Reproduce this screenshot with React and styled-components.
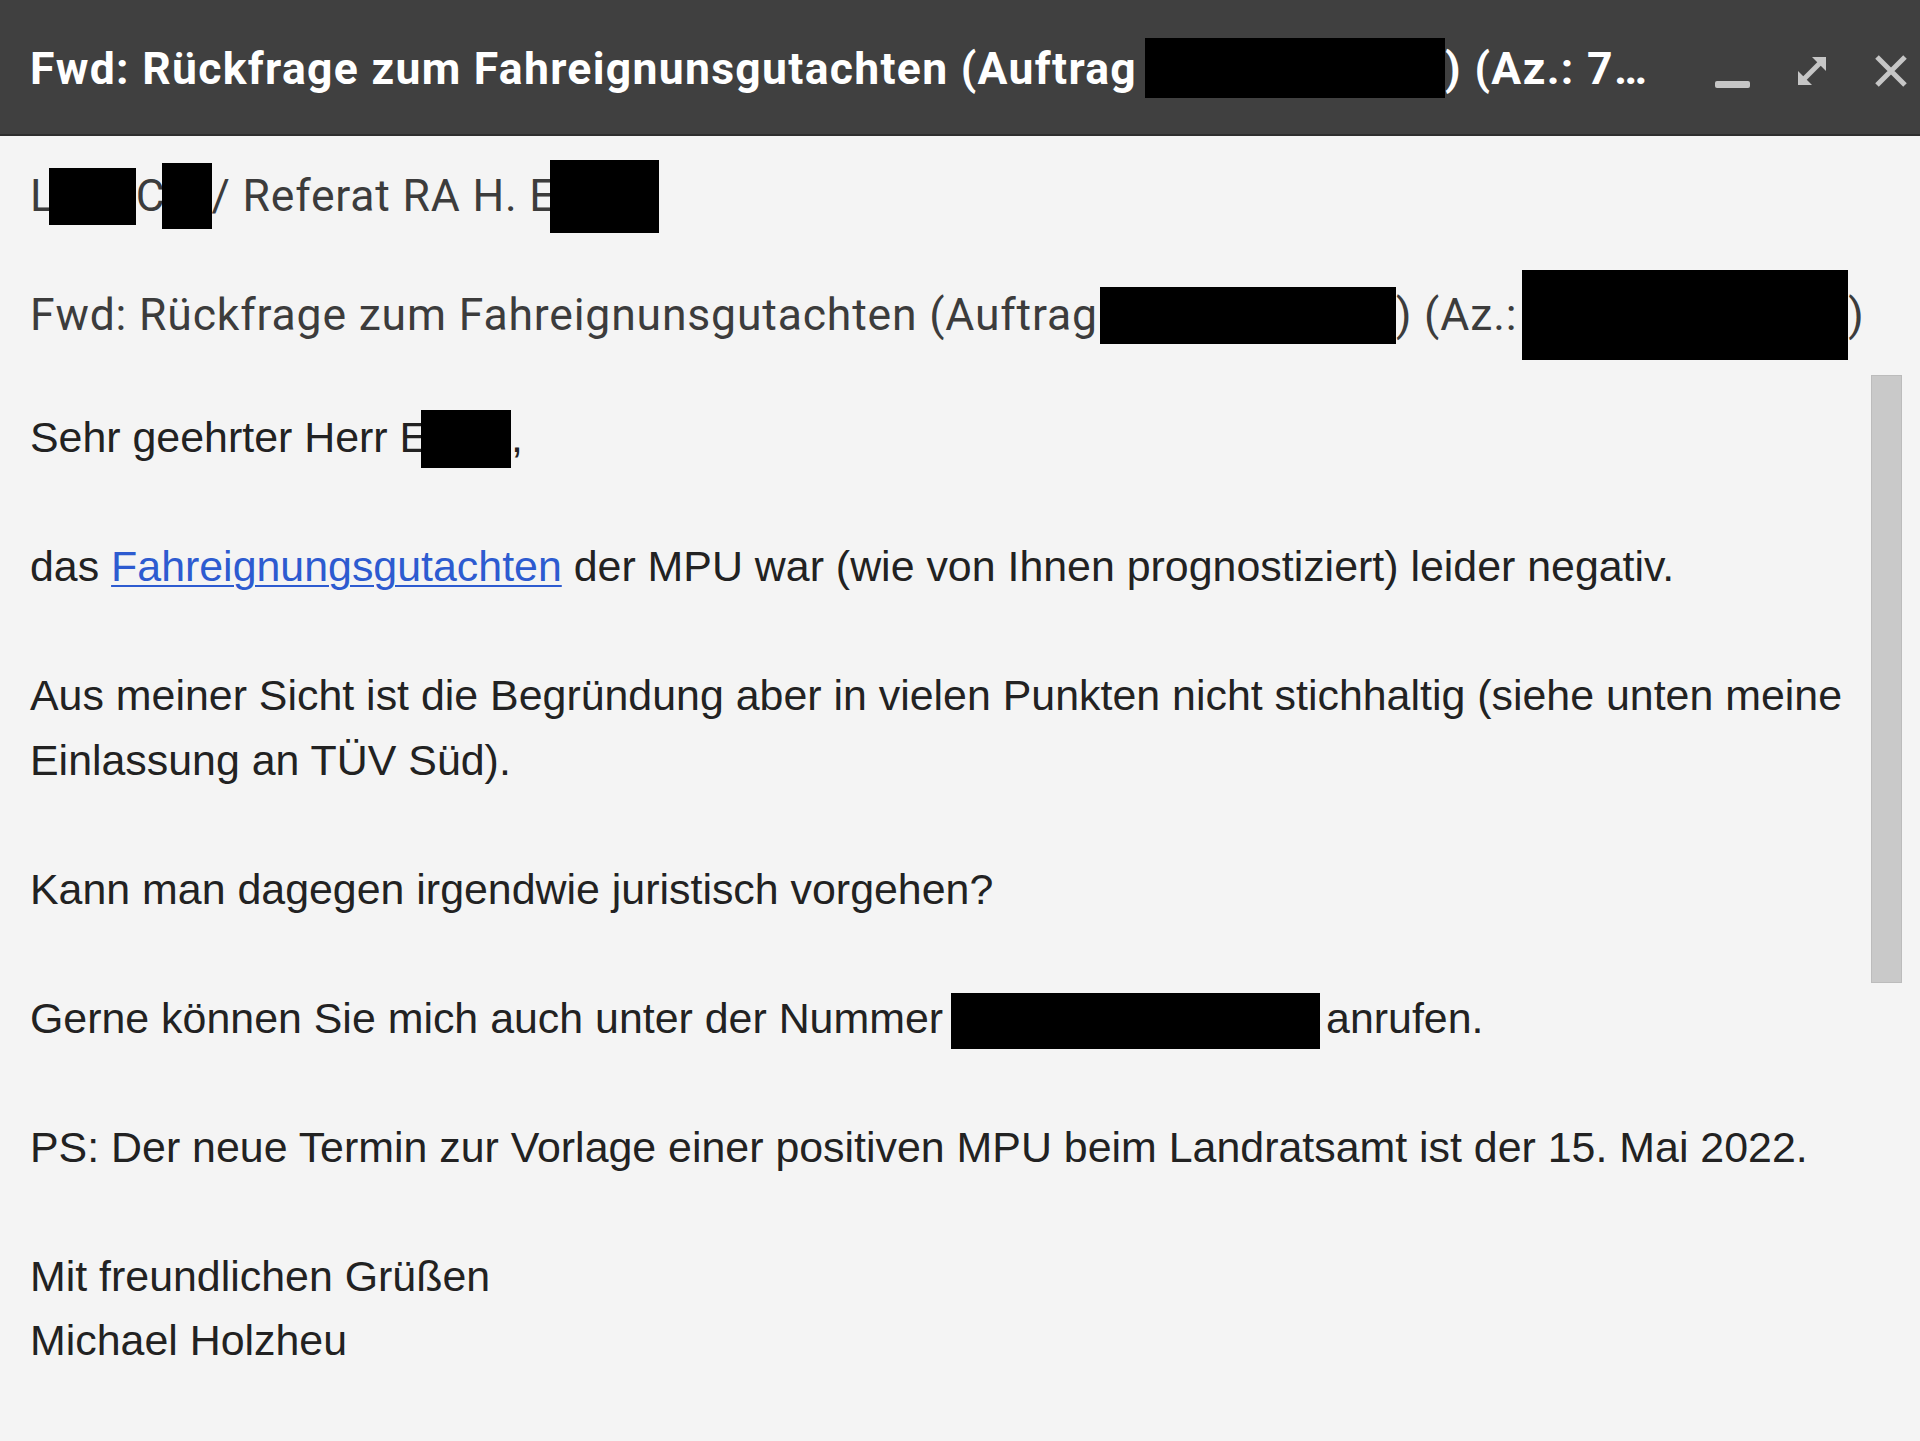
import React from 'react';
import styled, { createGlobalStyle } from 'styled-components';

const GlobalStyle = createGlobalStyle`
  html, body {
    margin: 0;
    padding: 0;
    background: #f4f4f4;
  }
`;

const Window = styled.div`
  width: 1920px;
  height: 1441px;
  display: flex;
  flex-direction: column;
  background: #f4f4f4;
  overflow: hidden;
`;

const TitleBar = styled.div`
  height: 136px;
  flex-shrink: 0;
  display: flex;
  align-items: center;
  padding: 0 10px 0 30px;
  background: #404040;
  border-bottom: 2px solid #2e2e2e;
  box-sizing: border-box;
`;

const Title = styled.div`
  flex: 1;
  font-family: Roboto, 'Liberation Sans', sans-serif;
  font-weight: 700;
  font-size: 44.5px;
  letter-spacing: 1.3px;
  color: #ffffff;
  white-space: nowrap;
  overflow: hidden;
  padding-top: 2px;
`;

const Controls = styled.div`
  display: flex;
  align-items: center;
  gap: 41px;
  padding-top: 8px;
`;

const IconButton = styled.span`
  display: flex;
  align-items: center;
  justify-content: center;
  width: 38px;
  height: 38px;
  color: #c6c6c6;
`;

const Redacted = styled.span`
  display: inline-block;
  width: ${(p) => p.$w}px;
  height: ${(p) => p.$h}px;
  margin-left: ${(p) => p.$ml || 0}px;
  margin-right: ${(p) => p.$mr || 0}px;
  vertical-align: ${(p) => p.$va || 0}px;
  background: #000;
`;

const FieldRow = styled.div`
  height: ${(p) => p.$h}px;
  flex-shrink: 0;
  display: flex;
  align-items: center;
  padding-left: 30px;
  font-family: Roboto, 'Liberation Sans', sans-serif;
  font-size: 44.5px;
  letter-spacing: ${(p) => p.$ls}px;
  color: #3c3c3c;
  white-space: nowrap;
`;

const BodyArea = styled.div`
  flex: 1;
  display: flex;
  align-items: flex-start;
`;

const Content = styled.div`
  flex: 1;
  padding: 31px 0 0 30px;
  font-family: 'Liberation Sans', Arial, sans-serif;
  font-size: 42.9px;
  line-height: 64.5px;
  color: #222222;
  white-space: nowrap;
`;

const Paragraph = styled.p`
  margin: 0 0 64.5px;
`;

const Link = styled.a`
  color: #2d5bd0;
  text-decoration: underline;
  text-underline-offset: 4px;
  text-decoration-thickness: 2px;
`;

const ScrollTrack = styled.div`
  width: 31px;
  margin: 1px 18px 0 0;
`;

const ScrollThumb = styled.div`
  height: 606px;
  background: #c9c9c9;
  border: 1px solid #bcbcbc;
`;

const MinimizeIcon = () => (
  <svg width="38" height="38" viewBox="0 0 38 38">
    <rect x="1" y="29" width="35" height="7" rx="2" fill="currentColor" />
  </svg>
);

const ExpandIcon = () => (
  <svg width="38" height="38" viewBox="0 0 38 38">
    <path d="M9 29 L29 9" stroke="currentColor" strokeWidth="5" />
    <path d="M19 5 H33 V19 Z" fill="currentColor" />
    <path d="M5 19 V33 H19 Z" fill="currentColor" />
  </svg>
);

const CloseIcon = () => (
  <svg width="38" height="38" viewBox="0 0 38 38">
    <path d="M5 5 L33 33 M33 5 L5 33" stroke="currentColor" strokeWidth="5" />
  </svg>
);

const App = () => (
  <>
    <GlobalStyle />
    <Window>
      <TitleBar>
        <Title>
          Fwd: Rückfrage zum Fahreignunsgutachten (Auftrag
          <Redacted $w={300} $h={60} $ml={8} $va={-14} />
          ) (Az.: 7…
        </Title>
        <Controls>
          <IconButton>
            <MinimizeIcon />
          </IconButton>
          <IconButton>
            <ExpandIcon />
          </IconButton>
          <IconButton>
            <CloseIcon />
          </IconButton>
        </Controls>
      </TitleBar>

      <FieldRow $h={120} $ls={0.8}>
        L
        <Redacted $w={87} $h={57} $ml={-6} $va={-18} />
        C
        <Redacted $w={50} $h={66} $ml={-4} $va={-22} />
        / Referat RA H. E
        <Redacted $w={109} $h={73} $ml={-5} $va={-18} />
      </FieldRow>

      <FieldRow $h={118} $ls={0.83}>
        Fwd: Rückfrage zum Fahreignunsgutachten (Auftrag
        <Redacted $w={296} $h={57} $ml={2} $va={-16} />
        ) (Az.:
        <Redacted $w={326} $h={90} $ml={5} $va={-25} />
        )
      </FieldRow>

      <BodyArea>
        <Content>
          <Paragraph>
            Sehr geehrter Herr E
            <Redacted $w={90} $h={58} $ml={-7} $va={-16} />,
          </Paragraph>
          <Paragraph>
            das <Link href="#">Fahreignungsgutachten</Link> der MPU war (wie von Ihnen prognostiziert) leider negativ.
          </Paragraph>
          <Paragraph>
            Aus meiner Sicht ist die Begründung aber in vielen Punkten nicht stichhaltig (siehe unten meine
            <br />
            Einlassung an TÜV Süd).
          </Paragraph>
          <Paragraph>Kann man dagegen irgendwie juristisch vorgehen?</Paragraph>
          <Paragraph>
            Gerne können Sie mich auch unter der Nummer
            <Redacted $w={369} $h={56} $ml={8} $mr={6} $va={-16} />
            anrufen.
          </Paragraph>
          <Paragraph>PS: Der neue Termin zur Vorlage einer positiven MPU beim Landratsamt ist der 15. Mai 2022.</Paragraph>
          <Paragraph>
            Mit freundlichen Grüßen
            <br />
            Michael Holzheu
          </Paragraph>
        </Content>
        <ScrollTrack>
          <ScrollThumb />
        </ScrollTrack>
      </BodyArea>
    </Window>
  </>
);

export default App;
